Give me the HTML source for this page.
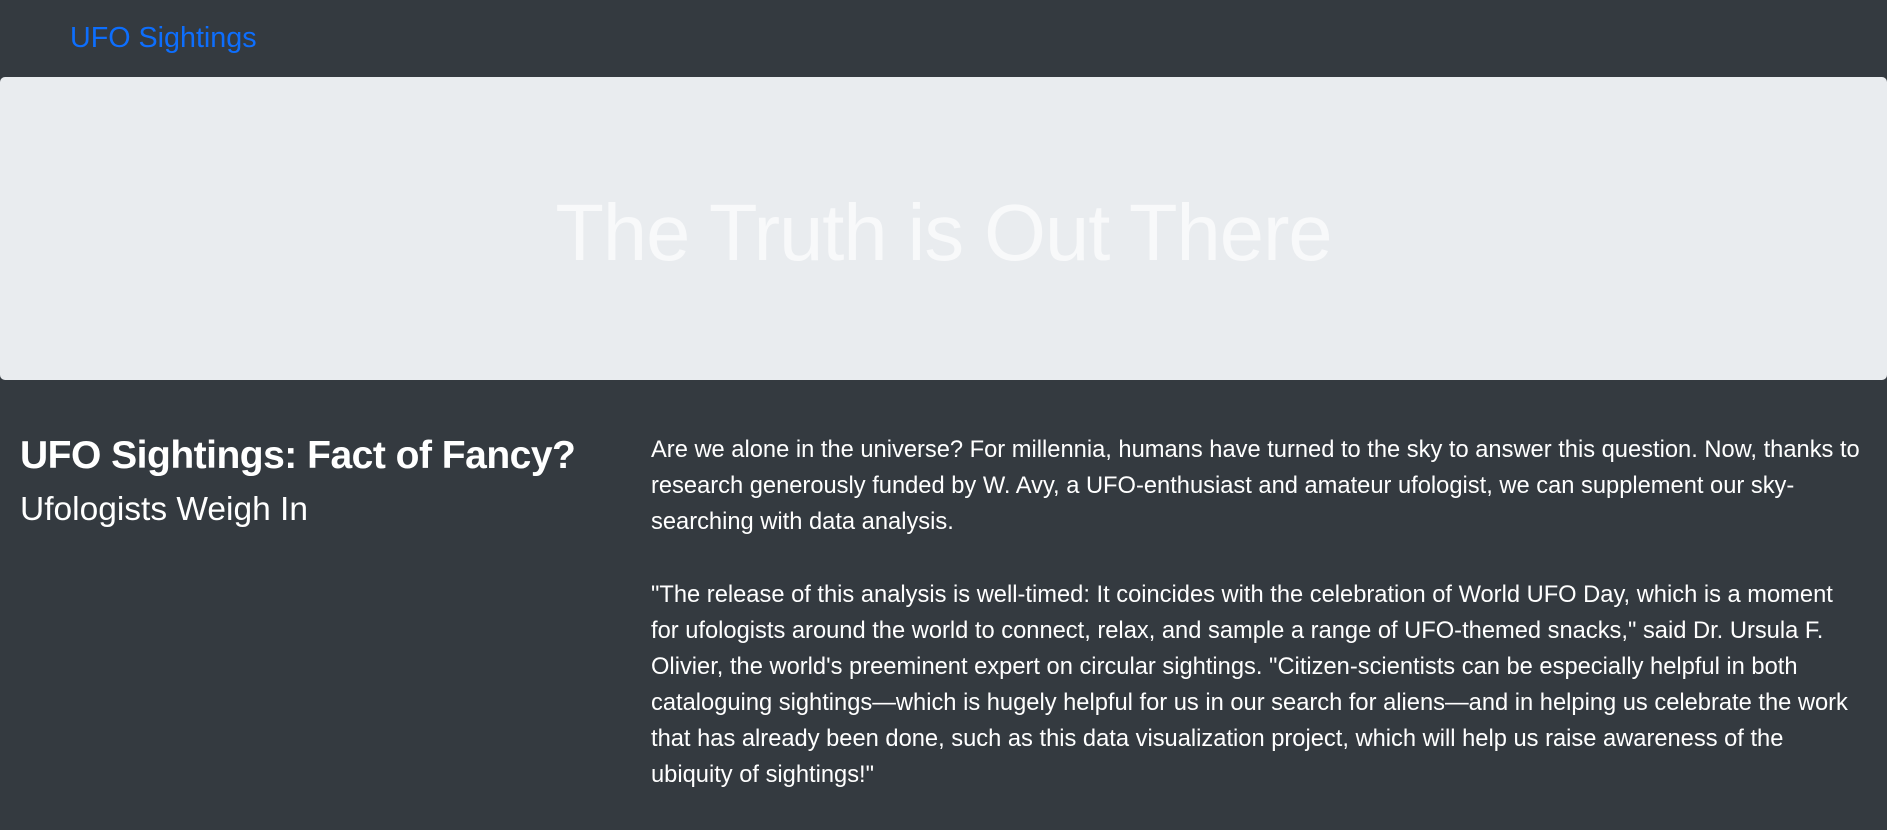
<!DOCTYPE html>
<html><head><meta charset="utf-8"><style>
*{margin:0;padding:0;box-sizing:border-box}
html,body{width:1887px;height:813px;overflow:hidden;background:#343a40;font-family:"Liberation Sans","DejaVu Sans",sans-serif;color:#fff}
.nav{height:77px;position:relative}
.brand{position:absolute;left:70px;top:18px;font-size:28.7px;color:#0d6efd;line-height:40px}
.jumbo{position:absolute;left:0;top:77px;width:1887px;height:303px;background:#e9ecef;border-radius:5px}
.jumbo h1{position:absolute;left:0;right:0;top:106px;text-align:center;font-weight:300;font-size:79.5px;line-height:100px;color:#f8f9fa;letter-spacing:-1px}
.left{position:absolute;left:20px;top:432px}
.left h2{font-size:39px;font-weight:bold;line-height:48px;letter-spacing:-0.5px;white-space:nowrap}
.left h3{font-size:33.5px;font-weight:normal;line-height:40px;margin-top:10px}
.right{position:absolute;left:651px;top:432px;font-size:23.7px;line-height:36px;white-space:nowrap}
.right p{margin-bottom:37px}
</style></head><body>
<div class="nav"><div class="brand">UFO Sightings</div></div>
<div class="jumbo"><h1>The Truth is Out There</h1></div>
<div class="left"><h2>UFO Sightings: Fact of Fancy?</h2><h3>Ufologists Weigh In</h3></div>
<div class="right">
<p>Are we alone in the universe? For millennia, humans have turned to the sky to answer this question. Now, thanks to<br>research generously funded by W. Avy, a UFO-enthusiast and amateur ufologist, we can supplement our sky-<br>searching with data analysis.</p>
<p>"The release of this analysis is well-timed: It coincides with the celebration of World UFO Day, which is a moment<br>for ufologists around the world to connect, relax, and sample a range of UFO-themed snacks," said Dr. Ursula F.<br>Olivier, the world's preeminent expert on circular sightings. "Citizen-scientists can be especially helpful in both<br>cataloguing sightings—which is hugely helpful for us in our search for aliens—and in helping us celebrate the work<br>that has already been done, such as this data visualization project, which will help us raise awareness of the<br>ubiquity of sightings!"</p>
</div>
</body></html>
